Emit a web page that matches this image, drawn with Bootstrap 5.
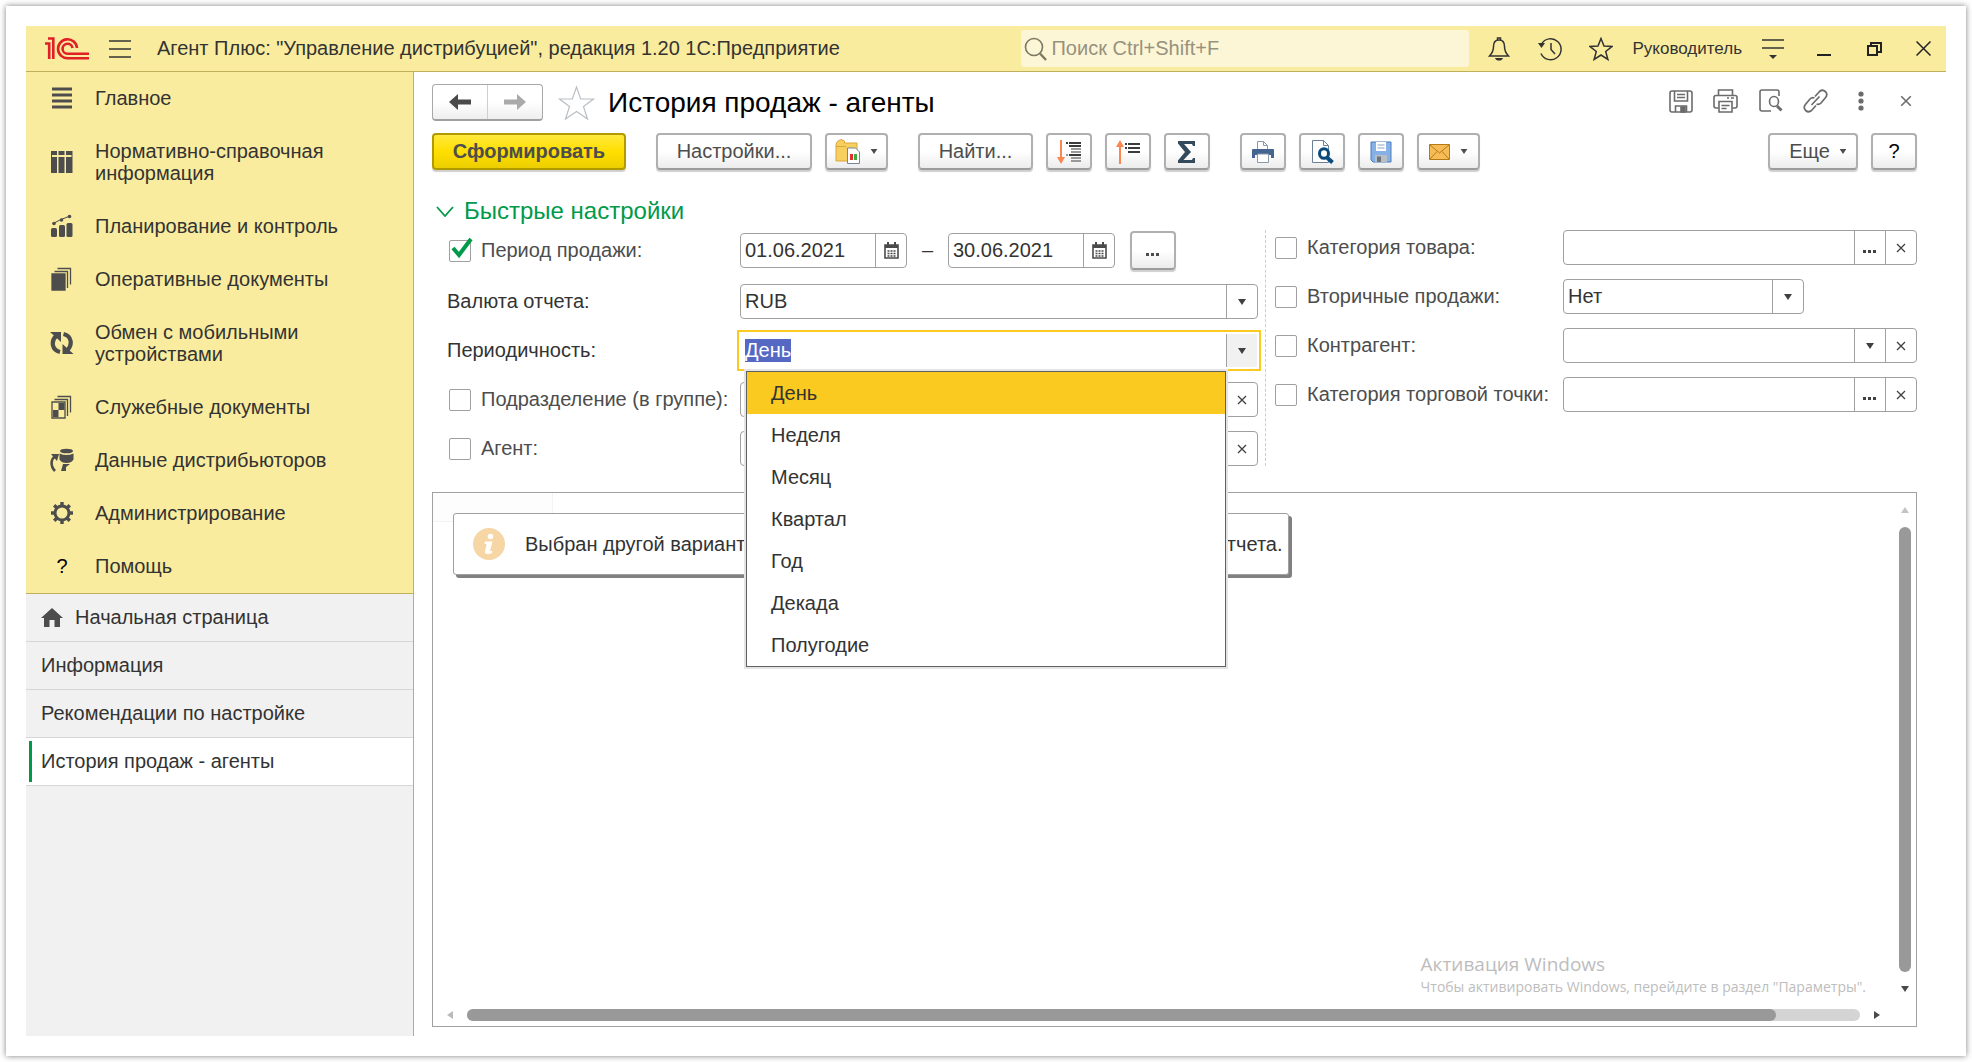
<!DOCTYPE html>
<html lang="ru">
<head>
<meta charset="utf-8">
<meta name="viewport" content="width=device-width, initial-scale=1">
<title>История продаж - агенты</title>
<link href="https://cdn.jsdelivr.net/npm/bootstrap@5.3.0/dist/css/bootstrap.min.css" rel="stylesheet">
<style>
:root{--ink:#333;--soft:#4d4d4d;--line:#a0a0a0;--sun:#faec9e;--sun-line:#bfb05c;--accent:#009a49;--pick:#faca20}
body{font-family:"Liberation Sans",Arial,sans-serif;font-size:20px;line-height:23px;color:var(--ink);background:#fff;padding:6px}
svg{display:block;flex:none}
.sheet{min-height:calc(100vh - 12px);padding:20px;background:#fff;box-shadow:0 0 6px rgba(0,0,0,.5)}
.topline{height:46px;background:var(--sun);border-bottom:1px solid var(--sun-line);padding:0 0 0 19px}
.burger{margin-left:20px}
.apptitle{margin-left:26px;white-space:nowrap}
.bare{border:0;background:none;padding:0;color:inherit;display:flex;align-items:center;justify-content:center}
.finder{background:#fdf6d6;border-radius:3px;height:37px;width:448px;margin:0 4px 0 auto;padding-left:3px}
.finder input{border:0;background:none;outline:0;width:100%;color:#333;padding:0 0 0 4px}
.finder input::placeholder{color:#96927e;opacity:1}
.topicons .bare{width:51px;height:45px}
.topicons .bare:last-child{width:46px}
.who{font-size:17px;color:var(--ink);text-decoration:none;padding:0 5px 0 6px;white-space:nowrap}
.side{width:388px;flex:none;background:#f1f1f1;border-right:1px solid var(--sun-line)}
.sections{background:var(--sun);border-bottom:1px solid var(--sun-line);line-height:22px}
.sections a{display:flex;align-items:center;gap:21px;padding:15px 20px 16px 24px;color:var(--ink);text-decoration:none}
.sections svg,.qm{width:24px;height:24px;flex:none;margin:-1px 0}
.sections a>svg{color:#4d4d4d}
.qm{text-align:center;color:#000;line-height:24px}
.tabsv a{display:flex;align-items:center;gap:12px;height:48px;padding-left:15px;border-bottom:1px solid #d6d6d6;color:var(--ink);text-decoration:none}
.tabsv a.on{background:#fff;padding-left:3px;gap:9px}
.tabsv a.on::before{content:"";width:3px;height:41px;background:var(--accent)}
.work{padding:12px 29px 9px 18px;min-width:0}
.btn1{display:inline-flex;align-items:center;justify-content:center;height:37px;border:2px solid #b0b0b0;border-bottom-color:#9c9c9c;border-radius:4px;background:linear-gradient(#fff 50%,#ececec);box-shadow:0 2px 1px #cfcfcf;color:var(--soft);padding:0;white-space:nowrap}
.sq{width:46px}.dd{width:63px;gap:10px}
.tools{gap:13px;margin-top:12px}
.apart{margin-left:17px}
.wset{width:156px}.wfind{width:115px}.wmore{width:90px;gap:9px;padding-left:10px}
.pickday{height:39px;margin-left:15px}
.go{width:194px;font-weight:700;border-color:#b09a00;background:linear-gradient(#ffe93d,#ffdf00 50%,#ecce00)}
.navpair{height:37px;width:111px;border:1px solid #a8a8a8;border-bottom:2px solid #a0a0a0;border-radius:4px;background:linear-gradient(#fff 50%,#eee)}
.navpair .bare{flex:1}.navpair .bare+.bare{border-left:1px solid #cfcfcf}
.fav{margin-left:15px}
.head1{font-size:28px;line-height:32px;color:#000;font-weight:400;margin:0 auto 0 13px}
.docicons{margin-right:-11px;padding-bottom:3px}
.docicons .bare{width:45px;height:34px;color:#6b6b6b}
.grp{font-size:24px;line-height:28px;color:var(--accent);margin:0;font-weight:400;padding:27px 0 5px 4px;gap:10px}
.quick{display:grid;grid-template-columns:minmax(0,23fr) minmax(0,18fr)}
.quick>div{display:flex;flex-direction:column;gap:14px}
.lcol{padding:1px 7px 0 0}
.rcol{padding-left:9px;border-left:1px dashed #ccc}
.line1{display:flex;align-items:center;min-height:35px}
.lab{display:flex;align-items:center;gap:10px;color:var(--soft);white-space:nowrap;flex:none}
.lcol .lab{width:308px;padding-left:17px}.lcol .lab.plain{padding-left:15px;color:var(--ink)}
.rcol .lab{width:288px}
.tick{appearance:none;width:22px;height:22px;border:1px solid var(--line);border-radius:2px;background:#fff;margin:0;flex:none}
.tickbox{position:relative;display:flex}
.tickbox svg{position:absolute;left:1px;top:-3px;pointer-events:none}
.fld{display:flex;height:35px;border:1px solid var(--line);border-radius:4px;background:#fff;min-width:0}
.fld input,.fld select{border:0;background:none;outline:0;appearance:none;flex:1;min-width:0;padding:0 4px;color:var(--ink)}
.fld .bare{width:31px;border-left:1px solid var(--line);color:#404040;flex:none}
.date{width:167px}
.dash{width:41px;text-align:center}
.short{width:241px}
.hot{outline:2px solid var(--pick);outline-offset:1px;border-color:#fff;border-radius:0;position:relative}
.hot .bare{background:#f1f1f1}
.hot input::selection{background:#5468c4;color:#fff}
.picks{position:absolute;left:5px;right:31px;top:37px;z-index:5;background:#fff;border:1px solid #606060;box-shadow:0 0 0 2px #e4e4e4;list-style:none;margin:0;padding:0}
.picks li{height:42px;line-height:42px;padding-left:24px}
.picks li.on{background:var(--pick)}
.report{margin-top:26px;border:1px solid var(--line);position:relative;flex:1;min-height:400px;display:grid;grid-template-columns:1fr 23px;grid-template-rows:1fr 23px}
.canvas{position:relative;padding:20px;min-width:0}
.cellhint{position:absolute;left:0;top:0;width:120px;height:29px;border:solid #f3f3f3;border-width:0 1px 1px 0;background:#fdfdfd}
.note{position:relative;display:inline-flex;align-items:center;gap:20px;height:62px;width:836px;padding-left:19px;background:#fff;border:1px solid var(--line);border-radius:3px;box-shadow:3px 3px 0 #808080;white-space:nowrap}
.vbar{display:flex;flex-direction:column;align-items:center;gap:14px;padding:14px 0 11px}
.vbar i{width:12px;border-radius:6px;background:#999;flex:1}
.hbar{display:flex;align-items:center;gap:14px;padding:0 13px 0 14px}
.hbar .rail{flex:1;height:12px;border-radius:6px;background:#d4d4d4}
.hbar i{display:block;width:94%;height:12px;border-radius:6px;background:#999}
.winmark{position:absolute;right:50px;bottom:29px;color:#bdbdbd;font-family:"Open Sans","Noto Sans",sans-serif;font-size:14px;line-height:20px;white-space:nowrap;pointer-events:none}
.winmark b{display:block;font-weight:400;font-size:19px;line-height:26px}
</style>
<script src="https://cdn.jsdelivr.net/npm/bootstrap@5.3.0/dist/js/bootstrap.bundle.min.js"></script>
</head>
<body>
<svg width="0" height="0" class="position-absolute" aria-hidden="true">
<symbol id="down" viewBox="0 0 8 6"><path d="M0 0h8L4 6z" fill="currentColor"/></symbol>
<symbol id="x" viewBox="0 0 10 10"><path d="M1 1l8 8M9 1l-8 8" stroke="currentColor" stroke-width="1.300"/></symbol>
<symbol id="dots" viewBox="0 0 14 3"><path d="M0 0h3v3H0zM5 0h3v3H5zM10 0h3v3h-3z" fill="currentColor"/></symbol>
<symbol id="cal" viewBox="0 0 15 17"><path d="M1 3h13v13H1z" fill="#fff" stroke="#4a4a4a" stroke-width="1.600"/><path d="M1 3h13v3H1zM3 0h2v4H3zM10 0h2v4h-2z" fill="#4a4a4a"/><path d="M3.500 9h8M3.500 11.500h8M3.500 14h8" stroke="#4a4a4a" stroke-width="1.500" stroke-dasharray="2 1"/></symbol>
</svg>
<div class="sheet d-flex flex-column">
<header class="topline d-flex align-items-center">
<svg width="44" height="23" viewBox="0 0 44 23" fill="none" stroke="#e01f26" stroke-width="2.600" role="img" aria-label="1С"><path d="M0 6.500h4.200V22"/><path d="M3 1.500h5.300V22"/><path d="M32 11A9.500 9.500 0 1 0 23 21.300h21"/><path d="M27.500 11a5 5 0 1 0-5 5.800H44"/></svg>
<button class="bare burger" aria-label="Меню"><svg width="22" height="18" viewBox="0 0 22 18" stroke="#333" stroke-width="1.600"><path d="M0 1h22M0 9h22M0 17h22"/></svg></button>
<span class="apptitle">Агент Плюс: "Управление дистрибуцией", редакция 1.20 1С:Предприятие</span>
<label class="finder d-flex align-items-center"><svg width="23" height="24" viewBox="0 0 23 24" fill="none" stroke="#7c7862" stroke-width="1.600"><circle cx="10" cy="10" r="8.500"/><path d="M16 16.500l6 6.500" stroke-width="2.400"/></svg><input type="search" placeholder="Поиск Ctrl+Shift+F" aria-label="Поиск"></label>
<div class="topicons d-flex align-items-center">
<button class="bare" aria-label="Уведомления"><svg width="22" height="24" viewBox="0 0 22 24" fill="none" stroke="#333" stroke-width="1.500"><path d="M11 3c-4 0-5.500 3-5.500 6.500 0 5-1.500 7-4 9.500h19c-2.500-2.500-4-4.500-4-9.500C16.500 6 15 3 11 3z"/><path d="M9.500 3V1h3v2"/><path d="M7 21h8c-.8 2-2 2.500-4 2.500S7.800 23 7 21z" fill="#333" stroke="none"/></svg></button>
<button class="bare" aria-label="История"><svg width="24" height="24" viewBox="0 0 24 24" fill="none" stroke="#333" stroke-width="1.500"><path d="M3.500 7A10.500 10.500 0 1 1 3 16.500"/><path d="M13 6v6.500l4 4.500"/><path d="M0 6h7l-3.500 5z" fill="#333" stroke="none"/></svg></button>
<button class="bare" aria-label="Избранное"><svg width="24" height="24" viewBox="0 0 24 24" fill="none" stroke="#333" stroke-width="1.500"><path d="M12 1.500l3 7.500 8 .5-6.300 5 2.200 8L12 18l-6.900 4.500 2.200-8L1 9.500l8-.5z"/></svg></button>
<a class="who" href="#">Руководитель</a>
<button class="bare" aria-label="Настройка панели"><svg width="22" height="22" viewBox="0 0 22 22"><path d="M0 2h22M0 10h22" stroke="#333" stroke-width="1.600"/><path d="M7 17h8l-4 4z" fill="#333"/></svg></button>
<button class="bare" aria-label="Свернуть"><svg width="14" height="16" viewBox="0 0 14 16"><path d="M0 14h14" stroke="#222" stroke-width="2"/></svg></button>
<button class="bare" aria-label="Восстановить"><svg width="15" height="14" viewBox="0 0 15 14" fill="none" stroke="#222" stroke-width="2"><path d="M1 4h9v9H1z"/><path d="M4 4V1h10v9h-4"/></svg></button>
<button class="bare" aria-label="Закрыть"><svg width="15" height="15" viewBox="0 0 15 15" stroke="#222" stroke-width="1.500"><path d="M.5.5l14 14M14.500.5l-14 14"/></svg></button>
</div>
</header>
<div class="d-flex flex-fill">
<aside class="side">
<nav class="sections">
<a href="#"><svg viewBox="0 0 24 24" stroke="currentColor" stroke-width="3"><path d="M2 3h20M2 9h20M2 15h20M2 21h20"/></svg>Главное</a>
<a href="#"><svg viewBox="0 0 24 24" fill="currentColor"><path d="M1 1h6v4H1zM8.500 1h6v4h-6zM16 1h6v4h-6zM1 7h6v16H1zM8.500 7h6v16h-6zM16 7h6v16h-6z"/><path d="M1 1h1v22H1zM21.500 1h1v22h-1z"/></svg>Нормативно-справочная информация</a>
<a href="#"><svg viewBox="0 0 24 24" fill="currentColor"><rect x="1" y="14" width="6" height="9" rx="1.500"/><rect x="9" y="11" width="6" height="12" rx="1.500"/><rect x="16.500" y="9" width="6" height="14" rx="1.500"/><path d="M3 9.500l8-4 9-3.500" stroke="currentColor" fill="none"/><circle cx="4" cy="9.500" r="1.800"/><circle cx="11.500" cy="6" r="1.800"/><circle cx="19.500" cy="2.500" r="1.800"/></svg>Планирование и контроль</a>
<a href="#"><svg viewBox="0 0 24 24" fill="none" stroke="currentColor" stroke-width="1.300"><path d="M2 7h13v16H2z" fill="currentColor"/><path d="M4.500 4.500h13V21M7.500 1.500h13v16"/></svg>Оперативные документы</a>
<a href="#"><svg viewBox="0 0 24 24" fill="none" stroke="currentColor" stroke-width="4.200"><path d="M10 21C1.500 19 1 10 6 5M13.500 3c8.500 2 9 11 4 16"/><path d="M0 1h11v10zM23.500 23h-11V13z" fill="currentColor" stroke="none"/></svg>Обмен с мобильными устройствами</a>
<a href="#"><svg viewBox="0 0 24 24" fill="none" stroke="currentColor" stroke-width="1.300"><path d="M2 7h13v16H2z"/><path d="M4.500 4.500h13V21M7.500 1.500h13v16"/><path d="M8.500 8h6v7h-6zM3 15h5.500v7H3z" fill="currentColor" stroke="none"/></svg>Служебные документы</a>
<a href="#"><svg viewBox="0 0 24 24" fill="currentColor"><ellipse cx="16.500" cy="3" rx="6.500" ry="2.300"/><path d="M9.500 5.500q7 3 14 0v6q-2 3.500-7 3.500t-7-3.500z"/><path d="M5 23C0 18 1 11 5 8.500" fill="none" stroke="currentColor" stroke-width="2.600"/><path d="M1 6h8l-2 7zM11 23l2-7h7l-4 3v4z"/></svg>Данные дистрибьюторов</a>
<a href="#"><svg viewBox="0 0 24 24" fill="none" stroke="currentColor"><circle cx="12" cy="12" r="7" stroke-width="3"/><path d="M12 1v4M12 19v4M1 12h4M19 12h4M4.200 4.200L7 7M17 17l2.800 2.800M19.800 4.200L17 7M7 17l-2.800 2.800" stroke-width="3.400"/></svg>Администрирование</a>
<a href="#"><span class="qm">?</span>Помощь</a>
</nav>
<nav class="tabsv">
<a href="#"><svg width="22" height="19" viewBox="0 0 22 19" fill="#4d4d4d"><path d="M11 0l11 10h-3v9h-5.500v-7h-5v7H3v-9H0z"/></svg>Начальная страница</a>
<a href="#">Информация</a>
<a href="#">Рекомендации по настройке</a>
<a href="#" class="on">История продаж - агенты</a>
</nav>
</aside>
<main class="work d-flex flex-column flex-fill">
<div class="d-flex align-items-center">
<div class="navpair d-flex"><button class="bare" aria-label="Назад"><svg width="22" height="16" viewBox="0 0 22 16" fill="#4a4a4a"><path d="M9 0v5.500h13v5H9V16L0 8z"/></svg></button><button class="bare" aria-label="Вперед"><svg width="22" height="16" viewBox="0 0 22 16" fill="#aaa"><path d="M13 0v5.500H0v5h13V16l9-8z"/></svg></button></div>
<button class="bare fav" aria-label="В избранное"><svg width="37" height="36" viewBox="0 0 37 36" fill="#fff" stroke="#b9bfc4" stroke-width="1.200"><path d="M18.500 2l4.200 12H35.500l-10 7.500 4 12.500-11-7.500-11 7.500 4-12.500-10-7.500h12.800z"/></svg></button>
<h1 class="head1">История продаж - агенты</h1>
<div class="docicons d-flex">
<button class="bare" aria-label="Сохранить"><svg width="24" height="23" viewBox="0 0 24 23" fill="none" stroke="currentColor" stroke-width="1.600"><rect x="1" y="1" width="22" height="21" rx="2"/><path d="M5.500 1v10h13V1M8 4.500h8M8 7.500h8M6.500 22v-6h11v6"/><path d="M12 17h4v5h-4z" fill="currentColor"/></svg></button>
<button class="bare" aria-label="Печать"><svg width="25" height="24" viewBox="0 0 25 24" fill="none" stroke="currentColor" stroke-width="1.600"><path d="M5.500 6V1h14v5M5.500 19H3q-2 0-2-2V8.500q0-2 2-2h19q2 0 2 2V17q0 2-2 2h-2.500"/><path d="M6 12.500h13V23H6zM8.500 16.500h8M8.500 19.500h5M14 9h2M18 9h3"/></svg></button>
<button class="bare" aria-label="Просмотр"><svg width="24" height="24" viewBox="0 0 24 24" fill="none" stroke="currentColor" stroke-width="1.600"><path d="M12 22H3q-2 0-2-2V3q0-2 2-2h15q2 0 2 2v4"/><ellipse cx="15" cy="12.500" rx="4.500" ry="5"/><path d="M18 17l4.500 4.500" stroke-width="3"/></svg></button>
<button class="bare" aria-label="Ссылка"><svg width="25" height="24" viewBox="0 0 25 24" fill="none" stroke="currentColor" stroke-width="1.700"><path d="M12 7.500l4.500-5q3-2.500 5.800 0t.3 6L18 14q-2 2-4.500 1M13 16.500l-4.500 5q-3 2.500-5.800 0t-.3-6L7 10q2-2 4.500-1M8.500 16l8-8.500"/></svg></button>
<button class="bare" aria-label="Еще"><svg width="6" height="20" viewBox="0 0 6 20" fill="currentColor"><circle cx="3" cy="3" r="2.600"/><circle cx="3" cy="10" r="2.600"/><circle cx="3" cy="17" r="2.600"/></svg></button>
<button class="bare" aria-label="Закрыть форму"><svg width="12" height="12"><use href="#x"/></svg></button>
</div>
</div>
<div class="tools d-flex align-items-center">
<button class="btn1 go">Сформировать</button>
<button class="btn1 wset apart">Настройки...</button>
<button class="btn1 dd" aria-label="Варианты"><svg width="25" height="25" viewBox="0 0 25 25"><path d="M1 6q0-2 2-4l3-1.500L9.500 2v2H22v18H1z" fill="#f7cf5e" stroke="#dba63a"/><path d="M1 7.500h10" stroke="#dba63a"/><path d="M12.500 9h8l4 4v11.500h-12z" fill="#fff" stroke="#74879a"/><path d="M15 15h3v6h-3z" fill="#e03030"/><path d="M19 15h3v6h-3z" fill="#3cae3c"/></svg><svg width="8" height="5"><use href="#down"/></svg></button>
<button class="btn1 wfind apart">Найти...</button>
<button class="btn1 sq" aria-label="Развернуть"><svg width="24" height="24" viewBox="0 0 24 24"><path d="M4 0v18" stroke="#fb8650" stroke-width="2"/><path d="M0 17h8l-4 7z" fill="#fb8650"/><path d="M9 3h2M12 3h12M12 6h12M12 15h12" stroke="#3b3b3b" stroke-width="1.800"/><path d="M14 9h10M14 12h10M14 18h10M14 21h10M9 15h2" stroke="#999" stroke-width="1.800"/></svg></button>
<button class="btn1 sq" aria-label="Свернуть группы"><svg width="24" height="24" viewBox="0 0 24 24"><path d="M4 6v18" stroke="#fb8650" stroke-width="2"/><path d="M0 7h8L4 0z" fill="#fb8650"/><path d="M9 4h2M12 4h12M9 8h2M12 8h12M12 12h12" stroke="#3b3b3b" stroke-width="1.800"/></svg></button>
<button class="btn1 sq" aria-label="Сумма"><svg width="18" height="22" viewBox="0 0 18 22"><path d="M0 0h17v5h-2l-1-2H6l7 8-7.500 8H14l1-2h2v5H0v-2.500L7 11 0 2.500z" fill="#34495a"/></svg></button>
<button class="btn1 sq apart" aria-label="Печать отчета"><svg width="22" height="22" viewBox="0 0 22 22"><path d="M5.500 9V.5h6l4 4V9" fill="#fff" stroke="#8a98a8"/><path d="M11.500.5v4h4" fill="none" stroke="#8a98a8"/><path d="M1 8h20q1 0 1 1v8h-3v-3H3v3H0V9q0-1 1-1z" fill="#43658f"/><path d="M5.500 13h11v8.500h-11z" fill="#fff" stroke="#8a98a8"/></svg></button>
<button class="btn1 sq" aria-label="Предварительный просмотр"><svg width="24" height="24" viewBox="0 0 24 24"><path d="M2.500.5h11l5 5v17h-16z" fill="#fff" stroke="#6c8097"/><path d="M13.500.5v5h5" fill="none" stroke="#6c8097"/><ellipse cx="14" cy="13.500" rx="4.500" ry="4.800" fill="#fff" stroke="#0b4a7d" stroke-width="3"/><path d="M17.500 18l5 4.500" stroke="#0b4a7d" stroke-width="4"/></svg></button>
<button class="btn1 sq" aria-label="Сохранить отчет"><svg width="22" height="22" viewBox="0 0 22 22"><path d="M1 1h20v20H3l-2-2z" fill="#85b1e6" stroke="#4c7db8"/><path d="M6 1h10v9H6z" fill="#fff"/><path d="M7.500 4h7M7.500 7h7" stroke="#8aa3bf"/><path d="M5 14h12v7H5z" fill="#b8bec4"/><path d="M7 15.500h4V21H7z" fill="#6b747d"/></svg></button>
<button class="btn1 dd" aria-label="Отправить"><svg width="21" height="16" viewBox="0 0 21 16" stroke="#b87818"><path d="M.5.5h20v15H.5z" fill="#f5bd55"/><path d="M1 1l9.500 8L20 1M1 15l7-7.500M20 15l-7-7.500" fill="none"/></svg><svg width="8" height="5"><use href="#down"/></svg></button>
<button class="btn1 wmore ms-auto">Еще <svg width="8" height="5"><use href="#down"/></svg></button>
<button class="btn1 sq text-black">?</button>
</div>
<h2 class="grp d-flex align-items-center"><svg width="18" height="11" viewBox="0 0 18 11" fill="none" stroke="currentColor" stroke-width="1.800"><path d="M1 1l8 9 8-9"/></svg>Быстрые настройки</h2>
<div class="quick">
<div class="lcol">
<div class="line1"><label class="lab"><span class="tickbox"><input class="tick" type="checkbox" checked><svg width="23" height="22" viewBox="0 0 23 22"><path d="M3 11l6 7L21 2" fill="none" stroke="#009a49" stroke-width="4"/></svg></span>Период продажи:</label>
<div class="fld date"><input value="01.06.2021" aria-label="Начало периода"><button class="bare" aria-label="Календарь"><svg width="15" height="17"><use href="#cal"/></svg></button></div>
<span class="dash">–</span>
<div class="fld date"><input value="30.06.2021" aria-label="Конец периода"><button class="bare" aria-label="Календарь"><svg width="15" height="17"><use href="#cal"/></svg></button></div>
<button class="btn1 sq pickday" aria-label="Выбрать период"><svg width="14" height="3" class="mt-2"><use href="#dots"/></svg></button></div>
<div class="line1"><label class="lab plain" for="cur">Валюта отчета:</label><div class="fld flex-fill"><select id="cur"><option>RUB</option></select><button class="bare" aria-label="Открыть список"><svg width="8" height="6"><use href="#down"/></svg></button></div></div>
<div class="line1"><label class="lab plain" for="per">Периодичность:</label><div class="fld hot flex-fill"><input id="per" value="День" role="combobox" aria-expanded="true" aria-controls="perlist"><button class="bare" aria-label="Открыть список"><svg width="8" height="6"><use href="#down"/></svg></button>
<ul class="picks" id="perlist" role="listbox"><li class="on" role="option" aria-selected="true">День</li><li role="option">Неделя</li><li role="option">Месяц</li><li role="option">Квартал</li><li role="option">Год</li><li role="option">Декада</li><li role="option">Полугодие</li></ul></div></div>
<div class="line1"><label class="lab"><input class="tick" type="checkbox">Подразделение (в группе):</label><div class="fld flex-fill"><input aria-label="Подразделение"><button class="bare" aria-label="Очистить"><svg width="10" height="10"><use href="#x"/></svg></button></div></div>
<div class="line1"><label class="lab"><input class="tick" type="checkbox">Агент:</label><div class="fld flex-fill"><input aria-label="Агент"><button class="bare" aria-label="Очистить"><svg width="10" height="10"><use href="#x"/></svg></button></div></div>
</div>
<div class="rcol">
<div class="line1"><label class="lab"><input class="tick" type="checkbox">Категория товара:</label><div class="fld flex-fill"><input aria-label="Категория товара"><button class="bare" aria-label="Выбрать"><svg width="14" height="3" class="mt-2"><use href="#dots"/></svg></button><button class="bare" aria-label="Очистить"><svg width="10" height="10"><use href="#x"/></svg></button></div></div>
<div class="line1"><label class="lab"><input class="tick" type="checkbox">Вторичные продажи:</label><div class="fld short"><select aria-label="Вторичные продажи"><option>Нет</option></select><button class="bare" aria-label="Открыть список"><svg width="8" height="6"><use href="#down"/></svg></button></div></div>
<div class="line1"><label class="lab"><input class="tick" type="checkbox">Контрагент:</label><div class="fld flex-fill"><input aria-label="Контрагент"><button class="bare" aria-label="Открыть список"><svg width="8" height="6"><use href="#down"/></svg></button><button class="bare" aria-label="Очистить"><svg width="10" height="10"><use href="#x"/></svg></button></div></div>
<div class="line1"><label class="lab"><input class="tick" type="checkbox">Категория торговой точки:</label><div class="fld flex-fill"><input aria-label="Категория торговой точки"><button class="bare" aria-label="Выбрать"><svg width="14" height="3" class="mt-2"><use href="#dots"/></svg></button><button class="bare" aria-label="Очистить"><svg width="10" height="10"><use href="#x"/></svg></button></div></div>
</div>
</div>
<section class="report">
<div class="canvas"><div class="cellhint"></div>
<div class="note"><svg width="32" height="32" viewBox="0 0 32 32"><circle cx="16" cy="16" r="16" fill="#f5d6a4"/><g fill="#fff"><circle cx="17.500" cy="8.500" r="2.800"/><path d="M12 13.500h7.500l-2.500 9.500h2.500l-.5 2q-3 1.500-6 .8-1.500-.8-1-2.800l1.700-7H11.500z"/></g></svg><span>Выбран другой вариант отчета. Нажмите "Сформировать" для получения отчета.</span></div></div>
<div class="vbar"><svg width="8" height="6" viewBox="0 0 8 6"><path d="M0 6h8L4 0z" fill="#c4c4c4"/></svg><i></i><svg width="8" height="6" color="#4a4a4a"><use href="#down"/></svg></div>
<div class="hbar"><svg width="6" height="8" viewBox="0 0 6 8"><path d="M6 0v8L0 4z" fill="#bbb"/></svg><div class="rail"><i></i></div><svg width="6" height="8" viewBox="0 0 6 8"><path d="M0 0v8l6-4z" fill="#4a4a4a"/></svg></div>
<div class="winmark"><b>Активация Windows</b>Чтобы активировать Windows, перейдите в раздел "Параметры".</div>
</section>
</main>
</div>
</div>
<script>
const period = document.getElementById('per');
period.focus();
period.select();
</script>
</body>
</html>
